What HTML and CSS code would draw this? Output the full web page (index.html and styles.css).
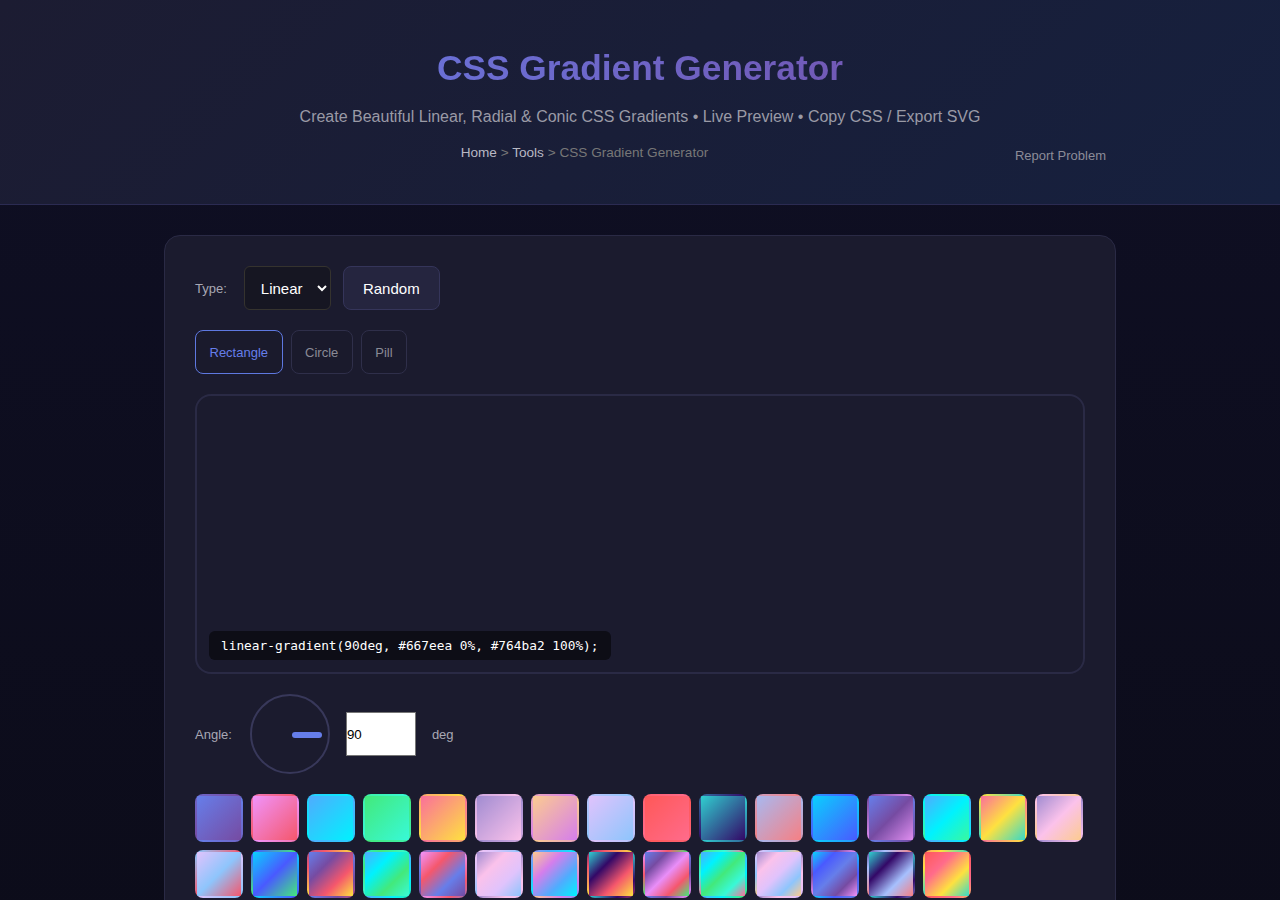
FILE: index.html
```html
<!DOCTYPE html>
<html>
<head>
    <title>CSS Gradient Generator</title>
    <link rel="stylesheet" href="styles.css">
</head>
<body>
<header class="hero">
    <h1>CSS Gradient Generator</h1>
    <p class="subtitle">Create Beautiful Linear, Radial &amp; Conic CSS Gradients • Live Preview • Copy CSS / Export SVG</p>
    <div class="crumbs-row">
        <nav class="crumbs"><a href="#">Home</a> &gt; <a href="#">Tools</a> &gt; CSS Gradient Generator</nav>
        <a class="report" href="#">Report Problem</a>
    </div>
</header>

<main class="card">
    <div class="row">
        <label class="lbl" for="type">Type:</label>
        <select id="type" class="type-select">
            <option>Linear</option>
            <option>Radial</option>
            <option>Conic</option>
        </select>
        <button class="btn-random">Random</button>
    </div>

    <div class="row shapes">
        <button class="shape active">Rectangle</button>
        <button class="shape">Circle</button>
        <button class="shape">Pill</button>
    </div>

    <div class="preview">
        <code class="css-out">linear-gradient(90deg, #667eea 0%, #764ba2 100%);</code>
    </div>

    <div class="row angle-row">
        <span class="lbl">Angle:</span>
        <div class="dial"><span class="needle"></span></div>
        <input class="angle-input" type="text" value="90">
        <span class="lbl">deg</span>
    </div>

    <div class="presets" id="presets"></div>
</main>

<script>
    // preset gradients
    var presets = [
        ['#667eea', '#764ba2'],
        ['#f093fb', '#f5576c'],
        ['#4facfe', '#00f2fe'],
        ['#43e97b', '#38f9d7'],
        ['#fa709a', '#fee140'],
        ['#a18cd1', '#fbc2eb'],
        ['#fccb90', '#d57eeb'],
        ['#e0c3fc', '#8ec5fc'],
        ['#ff5858', '#ff6b8b'],
        ['#30cfd0', '#330867'],
        ['#a8b8f0', '#f68084'],
        ['#0acffe', '#495aff'],
        ['#667eea', '#764ba2', '#e08ef0'],
        ['#4facfe', '#00f2fe', '#38f9a0'],
        ['#fa709a', '#fee140', '#38d9c7'],
        ['#a18cd1', '#fbc2eb', '#fccb90'],
        ['#e0c3fc', '#8ec5fc', '#f5576c'],
        ['#0acffe', '#495aff', '#43e97b'],
        ['#667eea', '#764ba2', '#f5576c', '#fee140'],
        ['#4facfe', '#00f2fe', '#43e97b', '#38f9d7'],
        ['#f093fb', '#f5576c', '#667eea', '#764ba2'],
        ['#a18cd1', '#fbc2eb', '#e0c3fc', '#8ec5fc'],
        ['#fccb90', '#d57eeb', '#4facfe', '#00f2fe'],
        ['#30cfd0', '#330867', '#f5576c', '#fee140'],
        ['#667eea', '#764ba2', '#e98ef8', '#f5576c', '#43e97b'],
        ['#4facfe', '#00f2fe', '#43e97b', '#38f9d7', '#fa709a'],
        ['#a18cd1', '#fbc2eb', '#e0c3fc', '#8ec5fc', '#fccb90'],
        ['#0acffe', '#495aff', '#667eea', '#764ba2', '#f093fb'],
        ['#30cfd0', '#330867', '#a6c0fe', '#f68084'],
        ['#ff5858', '#ff6b8b', '#fee140', '#38d9c7']
    ];

    var box = document.getElementById('presets');
    presets.forEach(function(p) {
        var sw = document.createElement('div');
        sw.className = 'swatch';
        sw.style.background = 'linear-gradient(135deg, ' + p.join(', ') + ')';
        box.appendChild(sw);
    });
</script>
</body>
</html>
```

FILE: styles.css
```css
body {
    font-family: "Liberation Sans", Arial, sans-serif;
    background: linear-gradient(180deg, #0f0f24 0%, #0c0c1a 100%);
    margin: 0;
    padding: 0;
    min-height: 900px;
    color: #ddd;
}
a {
    text-decoration: none;
}
.hero {
    background: linear-gradient(135deg, #1c1c32 0%, #16203e 100%);
    border-bottom: 1px solid #2b2b52;
    padding: 46px 174px 41px;
    text-align: center;
}
.hero h1 {
    margin: 0;
    font-size: 35.3px;
    line-height: 44px;
    font-weight: bold;
    background: linear-gradient(90deg, #667eea, #764ba2);
    -webkit-background-clip: text;
    background-clip: text;
    color: transparent;
}
.subtitle {
    margin: 17px 0 0;
    font-size: 16px;
    line-height: 20px;
    color: #9a9aa6;
}
.crumbs-row {
    display: flex;
    align-items: flex-start;
    gap: 20px;
    margin-top: 18px;
    height: 18px;
}
.crumbs {
    flex: 1;
    font-size: 13.6px;
    line-height: 16px;
    color: #777;
}
.crumbs a {
    color: #b8b8c4;
}
.report {
    margin-top: 3px;
    font-size: 13px;
    line-height: 16px;
    color: #8c8c98;
}
.card {
    width: 890px;
    margin: 30px auto 0;
    padding: 30px;
    background-color: #1b1b2e;
    border: 1px solid #2a2a45;
    border-radius: 16px;
}
.row {
    display: flex;
    align-items: center;
    gap: 12px;
}
.lbl {
    font-size: 13px;
    color: #a8a8b4;
    margin-right: 5px;
}
.type-select {
    height: 44px;
    width: 87px;
    padding: 0 4px 0 12px;
    font-family: "Liberation Sans", Arial, sans-serif;
    font-size: 15px;
    color: #fff;
    background-color: #161622;
    border: 1px solid #35332e;
    border-radius: 6px;
}
.btn-random {
    height: 44px;
    width: 97px;
    font-family: "Liberation Sans", Arial, sans-serif;
    font-size: 15px;
    color: #fff;
    background-color: #25253f;
    border: 1px solid #35355a;
    border-radius: 8px;
}
.shapes {
    margin-top: 20px;
    gap: 8px;
}
.shape {
    height: 44px;
    padding: 0 13.5px;
    font-family: "Liberation Sans", Arial, sans-serif;
    font-size: 13px;
    color: #8a8a96;
    background-color: #1a1a2c;
    border: 1px solid #2f2f4a;
    border-radius: 8px;
}
.shape.active {
    color: #667eea;
    border-color: #5e78e0;
}
.preview {
    margin-top: 20px;
    height: 264px;
    border: 2px solid #2a2a45;
    border-radius: 16px;
    display: flex;
    align-items: flex-end;
    padding: 0 12px 12px;
}
.css-out {
    background-color: #0d0d16;
    color: #fff;
    font-family: "DejaVu Sans Mono", monospace;
    font-size: 12.8px;
    line-height: 17px;
    padding: 6px 12px;
    border-radius: 6px;
}
.angle-row {
    margin-top: 20px;
    gap: 16px;
}
.angle-row .lbl {
    margin-right: 2px;
}
.dial {
    position: relative;
    width: 76px;
    height: 76px;
    border: 2px solid #38385a;
    border-radius: 50%;
}
.needle {
    position: absolute;
    left: 40px;
    top: 36px;
    width: 30px;
    height: 6px;
    border-radius: 3px;
    background-color: #667eea;
}
.angle-input {
    width: 68px;
    height: 42px;
    padding: 0;
    font-size: 13.3px;
    font-family: "Liberation Sans", Arial, sans-serif;
    border: 1px solid #767676;
    background: #fff;
    color: #000;
}
.presets {
    margin-top: 20px;
    display: grid;
    grid-template-columns: repeat(16, 48px);
    gap: 8px;
}
.swatch {
    width: 44px;
    height: 44px;
    border: 2px solid transparent;
    border-radius: 8px;
}
```
